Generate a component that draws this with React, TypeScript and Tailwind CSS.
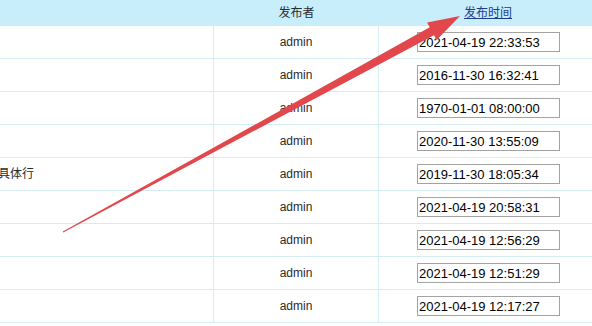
const rows = [
  { title: "", time: "2021-04-19 22:33:53" },
  { title: "", time: "2016-11-30 16:32:41" },
  { title: "", time: "1970-01-01 08:00:00" },
  { title: "", time: "2020-11-30 13:55:09" },
  { title: "具体行", time: "2019-11-30 18:05:34" },
  { title: "", time: "2021-04-19 20:58:31" },
  { title: "", time: "2021-04-19 12:56:29" },
  { title: "", time: "2021-04-19 12:51:29" },
  { title: "", time: "2021-04-19 12:17:27" },
];

// tapered screenshot-style arrow
function arrowPoints() {
  const tail = [63, 232];
  const tip = [460, 16];
  const dx = tip[0] - tail[0];
  const dy = tip[1] - tail[1];
  const len = Math.hypot(dx, dy);
  const ux = dx / len;
  const uy = dy / len;
  const nx = -uy;
  const ny = ux;
  const headLen = 32;
  const headW = 10;
  const shaftW = 4.5;
  const bx = tip[0] - ux * headLen;
  const by = tip[1] - uy * headLen;
  const pts = [
    [tail[0] + nx * 0.4, tail[1] + ny * 0.4],
    [bx + nx * shaftW, by + ny * shaftW],
    [bx + nx * headW, by + ny * headW],
    tip,
    [bx - nx * headW, by - ny * headW],
    [bx - nx * shaftW, by - ny * shaftW],
    [tail[0] - nx * 0.4, tail[1] - ny * 0.4],
  ];
  return pts.map((p) => `${p[0].toFixed(1)},${p[1].toFixed(1)}`).join(" ");
}

const App = () => {
  return (
    <div
      className="relative w-[592px] h-[326px] overflow-hidden bg-white text-[12px] text-[#2b2b2b]"
      style={{ fontFamily: '"Liberation Sans", "Noto Sans CJK SC", sans-serif' }}
    >
      <div className="w-[600px]">
        <div className="grid grid-cols-[214px_165px_1fr] h-[26px] bg-[#c8eefc] border-b border-[#cfeaf2]">
          <div></div>
          <div className="flex items-center justify-center">发布者</div>
          <div className="flex items-center pl-[85px]">
            <a href="#" className="text-[#1d3b8b] underline">发布时间</a>
          </div>
        </div>
        {rows.map((r, i) => (
          <div key={i} className="grid grid-cols-[214px_165px_1fr] h-[33px] border-b border-[#d4ecf3]">
            <div className="flex items-center border-r border-[#d4ecf3] overflow-hidden">
              {r.title && <span className="ml-[-2px] whitespace-nowrap">{r.title}</span>}
            </div>
            <div className="flex items-center justify-center border-r border-[#d4ecf3]">admin</div>
            <div className="flex items-center pl-[38px]">
              <input
                readOnly
                value={r.time}
                className="w-[143px] h-[20px] border border-[#a3a3a3] px-[1px] text-[13px] text-black outline-none"
                style={{ fontFamily: '"Liberation Sans", sans-serif' }}
              />
            </div>
          </div>
        ))}
      </div>
      <svg className="absolute inset-0 pointer-events-none" width="592" height="326">
        <polygon points={arrowPoints()} fill="#e2474b" />
      </svg>
    </div>
  );
};

export default App;
